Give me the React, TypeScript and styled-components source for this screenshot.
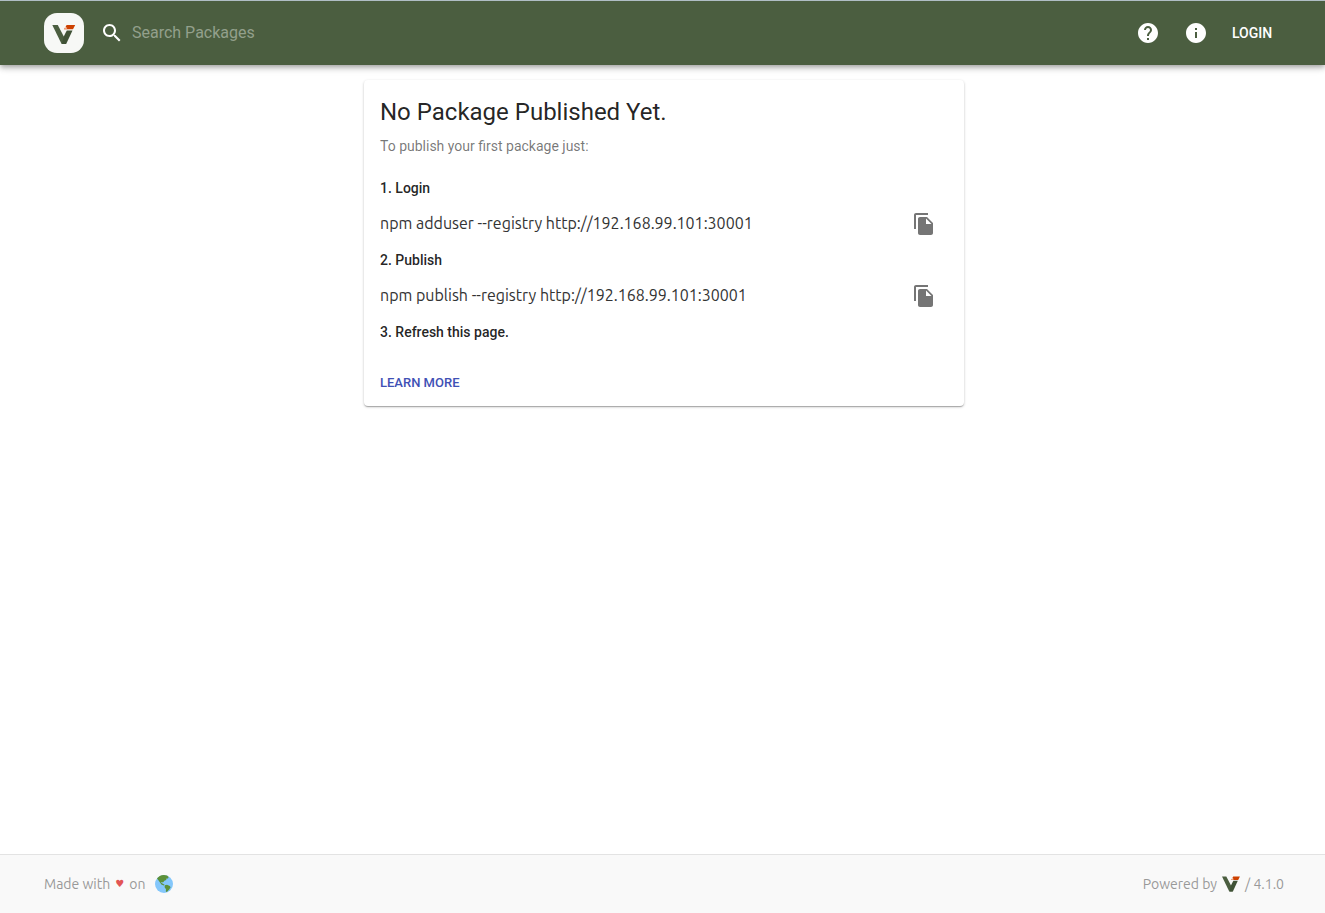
import React from "react";
import styled, { createGlobalStyle } from "styled-components";

const REGISTRY = "http://192.168.99.101:30001";
const ubuntu = `Ubuntu, "Noto Sans", "Open Sans", sans-serif`;
const roboto = `Roboto, "Liberation Sans", sans-serif`;

const GlobalStyle = createGlobalStyle`
  *, *::before, *::after { box-sizing: border-box; }
  body { margin: 0; background: #fff; font-family: ${roboto}; color: rgba(0, 0, 0, 0.87); }
  button, input { font-family: inherit; }
`;

const Page = styled.div`
  display: flex;
  flex-direction: column;
  min-height: 100vh;
`;

const Header = styled.header`
  background: #4b5e40;
  border-top: 1px solid #b0bec5;
  box-shadow: 0 2px 4px -1px rgba(0, 0, 0, 0.2), 0 4px 5px 0 rgba(0, 0, 0, 0.14),
    0 1px 10px 0 rgba(0, 0, 0, 0.12);
  padding: 0 41px 0 44px;
`;

const Container = styled.div`
  display: flex;
  align-items: center;
  justify-content: space-between;
  max-width: 1240px;
  margin: 0 auto;
`;

const Toolbar = styled(Container)`
  height: 64px;
`;

const Group = styled.div`
  display: flex;
  align-items: center;
`;

const LogoLink = styled.a`
  display: flex;
  margin-right: 16px;
`;

const SearchBox = styled.label`
  display: flex;
  align-items: center;
  gap: 8px;
  color: #fff;
`;

const SearchInput = styled.input`
  width: 320px;
  padding: 0;
  border: 0;
  outline: 0;
  background: transparent;
  color: #fff;
  font-size: 16px;
  line-height: 24px;
  &::placeholder { color: #93a08c; opacity: 1; }
`;

const IconButton = styled.button<{ $color: string }>`
  display: flex;
  align-items: center;
  justify-content: center;
  width: 48px;
  height: 48px;
  padding: 0;
  border: 0;
  background: transparent;
  color: ${(p) => p.$color};
  cursor: pointer;
`;

const LoginButton = styled.button`
  min-width: 64px;
  height: 36px;
  padding: 0 8px;
  border: 0;
  background: transparent;
  color: #fff;
  font-size: 14px;
  font-weight: 500;
  cursor: pointer;
`;

const Main = styled.main`
  flex: 1;
  padding: 15px 41px 16px 44px;
`;

const Card = styled.section`
  max-width: 600px;
  margin: 0 auto;
  border-radius: 4px;
  background: #fff;
  box-shadow: 0 1px 3px 0 rgba(0, 0, 0, 0.2), 0 1px 1px 0 rgba(0, 0, 0, 0.14),
    0 2px 1px -1px rgba(0, 0, 0, 0.12);
`;

const CardContent = styled.div`
  padding: 16px;
`;

const Title = styled.h1`
  margin: 0 0 8px;
  font-size: 24px;
  font-weight: 400;
  line-height: 32px;
`;

const Subtitle = styled.p`
  margin: 0 0 20px;
  color: rgba(0, 0, 0, 0.54);
  font-size: 14px;
  line-height: 20px;
`;

const Step = styled.h2`
  margin: 0;
  font-size: 14px;
  font-weight: 500;
  line-height: 24px;
`;

const CommandRow = styled.div`
  display: flex;
  align-items: center;
  justify-content: space-between;
`;

const Command = styled.span`
  padding-bottom: 2px;
  color: #333;
  font-family: ${ubuntu};
  font-size: 16px;
  line-height: 24px;
`;

const CardActions = styled.div`
  display: flex;
  padding: 8px 16px;
`;

const LearnMore = styled.a`
  padding: 4px 0;
  color: #3f51b5;
  font-size: 13px;
  font-weight: 500;
  line-height: 22px;
  text-decoration: none;
`;

const Footer = styled.footer`
  padding: 0 41px 0 44px;
  border-top: 1px solid #e3e3e3;
  background: #f9f9f9;
  color: #999;
  font-family: ${ubuntu};
  font-size: 14px;
  line-height: 20px;
`;

const FooterBar = styled(Container)`
  height: 58px;
`;

const FooterGroup = styled(Group)`
  gap: 5px;
`;

const Heart = styled.span`
  color: #e25555;
  font-family: "DejaVu Sans", sans-serif;
  font-size: 10px;
`;

const Globe = styled.svg`
  margin-left: 4px;
`;

const VMark = () => (
  <>
    <path d="M8.3 12H13.8L20.2 24.2L22 31H17.6Z" fill="#4b5e40" />
    <path d="M19.6 23.8L22.8 17.5H28.5L22.2 31H18Z" fill="#405236" />
    <path d="M22.6 12H31.2L29 16.3H20L20.6 15H22.2L22.6 14.2H21.4Z" fill="#cd4000" />
    <path d="M20.5 14.8H23.4L22.6 16.3H19.8Z" fill="#f0a27f" />
  </>
);

const Badge = () => (
  <svg width="40" height="40" viewBox="0 0 40 40" aria-hidden="true">
    <rect width="40" height="40" rx="13" fill="#f7f8f6" />
    <VMark />
  </svg>
);

const Icon = ({ d }: { d: string }) => (
  <svg width="24" height="24" viewBox="0 0 24 24" fill="currentColor" aria-hidden="true">
    <path d={d} />
  </svg>
);

const icons = {
  search:
    "M15.5 14h-.79l-.28-.27C15.41 12.59 16 11.11 16 9.5 16 5.91 13.09 3 9.5 3S3 5.91 3 9.5 5.91 16 9.5 16c1.61 0 3.09-.59 4.23-1.57l.27.28v.79l5 4.99L20.49 19l-4.99-5zm-6 0C7.01 14 5 11.99 5 9.5S7.01 5 9.5 5 14 7.01 14 9.5 11.99 14 9.5 14z",
  help:
    "M12 2C6.48 2 2 6.48 2 12s4.48 10 10 10 10-4.48 10-10S17.52 2 12 2zm1 17h-2v-2h2v2zm2.07-7.75l-.9.92C13.45 12.9 13 13.5 13 15h-2v-.5c0-1.1.45-2.1 1.17-2.83l1.24-1.26c.37-.36.59-.86.59-1.41 0-1.1-.9-2-2-2s-2 .9-2 2H8c0-2.21 1.79-4 4-4s4 1.79 4 4c0 .88-.36 1.68-.93 2.25z",
  info:
    "M12 2C6.48 2 2 6.48 2 12s4.48 10 10 10 10-4.48 10-10S17.52 2 12 2zm1 15h-2v-6h2v6zm0-8h-2V7h2v2z",
  copy:
    "M16 1H4c-1.1 0-2 .9-2 2v14h2V3h12V1zm-1 4l6 6v10c0 1.1-.9 2-2 2H7.99C6.89 23 6 22.1 6 21l.01-14c0-1.1.89-2 1.99-2h7zm-1 7h5.5L14 6.5V12z",
};

const CopyCommand = ({ text }: { text: string }) => (
  <CommandRow>
    <Command>{text}</Command>
    <IconButton type="button" $color="#757575" aria-label="Copy to clipboard">
      <Icon d={icons.copy} />
    </IconButton>
  </CommandRow>
);

export default function App() {
  return (
    <Page>
      <GlobalStyle />
      <Header>
        <Toolbar>
          <Group>
            <LogoLink href="#" aria-label="Home">
              <Badge />
            </LogoLink>
            <SearchBox>
              <Icon d={icons.search} />
              <SearchInput type="text" placeholder="Search Packages" aria-label="Search Packages" />
            </SearchBox>
          </Group>
          <Group>
            <IconButton type="button" $color="#fff" aria-label="Help">
              <Icon d={icons.help} />
            </IconButton>
            <IconButton type="button" $color="#fff" aria-label="Information">
              <Icon d={icons.info} />
            </IconButton>
            <LoginButton type="button">LOGIN</LoginButton>
          </Group>
        </Toolbar>
      </Header>
      <Main>
        <Card>
          <CardContent>
            <Title>No Package Published Yet.</Title>
            <Subtitle>To publish your first package just:</Subtitle>
            <Step>1. Login</Step>
            <CopyCommand text={`npm adduser --registry ${REGISTRY}`} />
            <Step>2. Publish</Step>
            <CopyCommand text={`npm publish --registry ${REGISTRY}`} />
            <Step>3. Refresh this page.</Step>
          </CardContent>
          <CardActions>
            <LearnMore href="#">LEARN MORE</LearnMore>
          </CardActions>
        </Card>
      </Main>
      <Footer>
        <FooterBar>
          <FooterGroup>
            <span>Made with</span>
            <Heart>♥</Heart>
            <span>on</span>
            <Globe width="20" height="20" viewBox="0 0 20 20" aria-label="Earth">
              <circle cx="10" cy="10" r="9" fill="#84c7fb" />
              <path
                d="M3 4.6C4.4 2.6 6.8 1.2 9.8 1L13 1.5L14.6 3L14 4.6L12.4 4.4L12.2 6L10.4 6.8L9 8.6L7.8 8L7 8.4L8.4 9.6L10.6 10.8L9.8 11.4L7.4 10.4L6 8.6L4.6 6.6Z"
                fill="#5c9139"
              />
              <path
                d="M10.8 11.2L13 10.8L15.8 12L16.6 13.2L15.2 15.6L12.8 18L11.8 17.6L12 15.2L10.6 13.2Z"
                fill="#5c9139"
              />
            </Globe>
          </FooterGroup>
          <FooterGroup>
            <span>Powered by</span>
            <svg width="18" height="16" viewBox="8.3 11.5 23 20" aria-label="Verdaccio">
              <VMark />
            </svg>
            <span>/ 4.1.0</span>
          </FooterGroup>
        </FooterBar>
      </Footer>
    </Page>
  );
}
